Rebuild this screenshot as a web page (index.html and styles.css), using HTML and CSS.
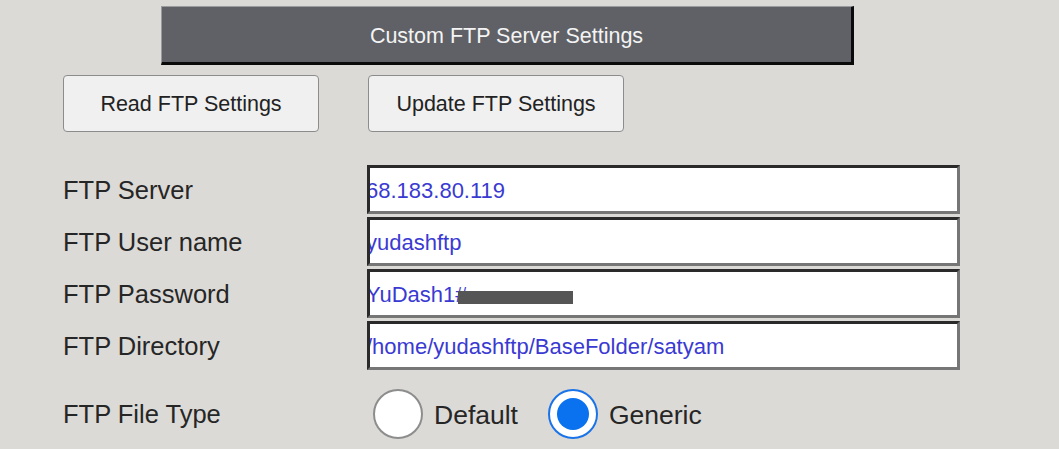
FILE: index.html
```html
<!DOCTYPE html>
<html>
<head>
<meta charset="utf-8">
<link rel="stylesheet" href="styles.css">
</head>
<body>
<div class="page">
  <div class="header">Custom FTP Server Settings</div>
  <div class="btn-row">
    <button class="btn">Read FTP Settings</button>
    <button class="btn">Update FTP Settings</button>
  </div>
  <div class="form">
    <label class="lbl">FTP Server</label>
    <div class="field"><span class="val">68.183.80.119</span></div>
    <label class="lbl">FTP User name</label>
    <div class="field"><span class="val">yudashftp</span></div>
    <label class="lbl">FTP Password</label>
    <div class="field"><span class="val">YuDash1#</span><span class="redact"></span></div>
    <label class="lbl">FTP Directory</label>
    <div class="field"><span class="val">/home/yudashftp/BaseFolder/satyam</span></div>
  </div>
  <div class="radio-row">
    <span class="lbl">FTP File Type</span>
    <div class="radios">
      <label class="opt"><span class="radio"></span><span class="opt-text">Default</span></label>
      <label class="opt"><span class="radio checked"></span><span class="opt-text">Generic</span></label>
    </div>
  </div>
</div>
</body>
</html>
```

FILE: styles.css
```css
html, body {
  margin: 0;
  padding: 0;
  background: #dcdad6;
  font-family: "Liberation Sans", Arial, sans-serif;
}
.page {
  width: 1059px;
  height: 449px;
  overflow: hidden;
  padding: 6px 0 0 63px;
  box-sizing: border-box;
}
.header {
  margin-left: 98px;
  width: 693px;
  height: 59px;
  box-sizing: border-box;
  background: #5f6166;
  border-top: 1px solid #9a9b9e;
  border-left: 1px solid #9a9b9e;
  border-right: 3px solid #0a0a0a;
  border-bottom: 3px solid #0a0a0a;
  color: #f4f4f4;
  font-size: 21.5px;
  display: flex;
  align-items: center;
  justify-content: center;
  padding-top: 3px;
}
.btn-row {
  display: flex;
  gap: 49px;
  margin-top: 10px;
}
.btn {
  width: 256px;
  height: 57px;
  box-sizing: border-box;
  background: #f0f0f0;
  border: 1px solid #8c8c8c;
  border-radius: 4px;
  font-family: "Liberation Sans", Arial, sans-serif;
  font-size: 21.5px;
  color: #222;
  padding: 2px 0 0;
}
.form {
  display: grid;
  grid-template-columns: 304px 593px;
  grid-auto-rows: 49px;
  row-gap: 3px;
  margin-top: 33px;
  align-items: center;
}
.lbl {
  font-size: 25.5px;
  color: #262626;
  padding-top: 1px;
}
.field {
  height: 49px;
  box-sizing: border-box;
  background: #fff;
  border-style: solid;
  border-width: 3px;
  border-color: #2a2a2a #767676 #767676 #2a2a2a;
  display: flex;
  align-items: center;
  overflow: hidden;
  position: relative;
}
.val {
  font-size: 22px;
  color: #3a3ad2;
  margin-left: -4px;
  padding-top: 2px;
  white-space: nowrap;
}
.redact {
  position: absolute;
  left: 88px;
  top: 19px;
  width: 115px;
  height: 13px;
  background: #555;
}
.radio-row {
  display: flex;
  align-items: center;
  margin-top: 18px;
  height: 52px;
}
.radio-row .lbl {
  width: 310px;
}
.radios {
  display: flex;
  align-items: center;
}
.opt {
  display: flex;
  align-items: center;
  margin-right: 30px;
}
.radio {
  width: 50px;
  height: 50px;
  box-sizing: border-box;
  border-radius: 50%;
  border: 2px solid #8d8d8d;
  background: #fff;
  position: relative;
}
.radio.checked {
  border: 2px solid #1a73e8;
}
.radio.checked::after {
  content: "";
  position: absolute;
  left: 7px;
  top: 7px;
  width: 32px;
  height: 32px;
  border-radius: 50%;
  background: #0a72ef;
}
.opt-text {
  font-size: 26.5px;
  color: #262626;
  margin-left: 11px;
  padding-top: 2px;
}
```
